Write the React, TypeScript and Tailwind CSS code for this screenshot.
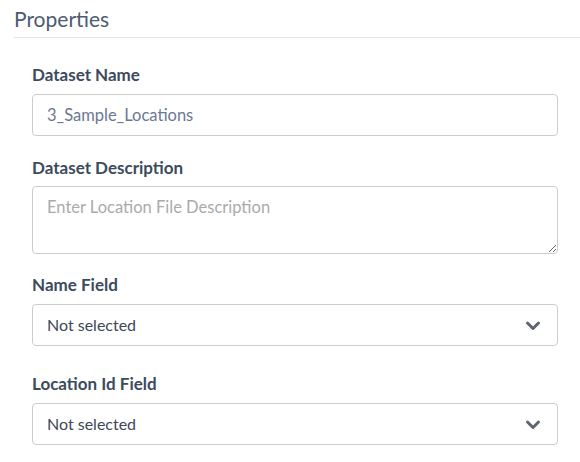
import React from "react";

function Chevron() {
  return (
    <svg width="16" height="14" viewBox="0 0 16 14" className="shrink-0">
      <polyline points="2.5,5 8,10.5 13.5,5" fill="none" stroke="#5f6670" strokeWidth="3" strokeLinecap="round" strokeLinejoin="round" />
    </svg>
  );
}

function SelectBox({ value }: { value: string }) {
  return (
    <div className="flex h-[42px] items-center justify-between rounded-[4px] border border-[#cccccc] bg-white pl-[14px] pr-[16px] text-[16px] text-[#3c4858]">
      <span>{value}</span>
      <Chevron />
    </div>
  );
}

export default function App() {
  return (
    <div className="min-h-[462px] w-[580px] bg-white pl-[14px] pt-[5px]" style={{ fontFamily: "Lato, 'Open Sans', sans-serif" }}>
      <h2 className="border-b border-[#e4e4e4] pb-[4px] text-[21px] leading-[28px] text-[#4d5b70]">Properties</h2>
      <div className="pl-[18px] pr-[22px] pt-[23px]">
        <label className="block pt-[2px] text-[17px] font-bold leading-[24px] text-[#3c4a5e]">Dataset Name</label>
        <div className="mt-[7px] flex h-[42px] items-center rounded-[4px] border border-[#cccccc] bg-white pl-[14px] text-[16.5px] text-[#6b7895]">
          3_Sample_Locations
        </div>

        <label className="mt-[18px] block pt-[2px] text-[17px] font-bold leading-[24px] text-[#3c4a5e]">Dataset Description</label>
        <textarea
          className="mt-[6px] block h-[68px] w-full resize-y rounded-[4px] border border-[#cccccc] bg-white px-[14px] py-[8px] text-[16.5px] leading-[24px] text-[#3c4858] outline-none placeholder:text-[#aaaaaa]"
          placeholder="Enter Location File Description"
        />

        <label className="mt-[17px] block pt-[2px] text-[17px] font-bold leading-[24px] text-[#3c4a5e]">Name Field</label>
        <div className="mt-[7px]">
          <SelectBox value="Not selected" />
        </div>

        <label className="mt-[24px] block pt-[2px] text-[17px] font-bold leading-[24px] text-[#3c4a5e]">Location Id Field</label>
        <div className="mt-[7px]">
          <SelectBox value="Not selected" />
        </div>
      </div>
    </div>
  );
}
